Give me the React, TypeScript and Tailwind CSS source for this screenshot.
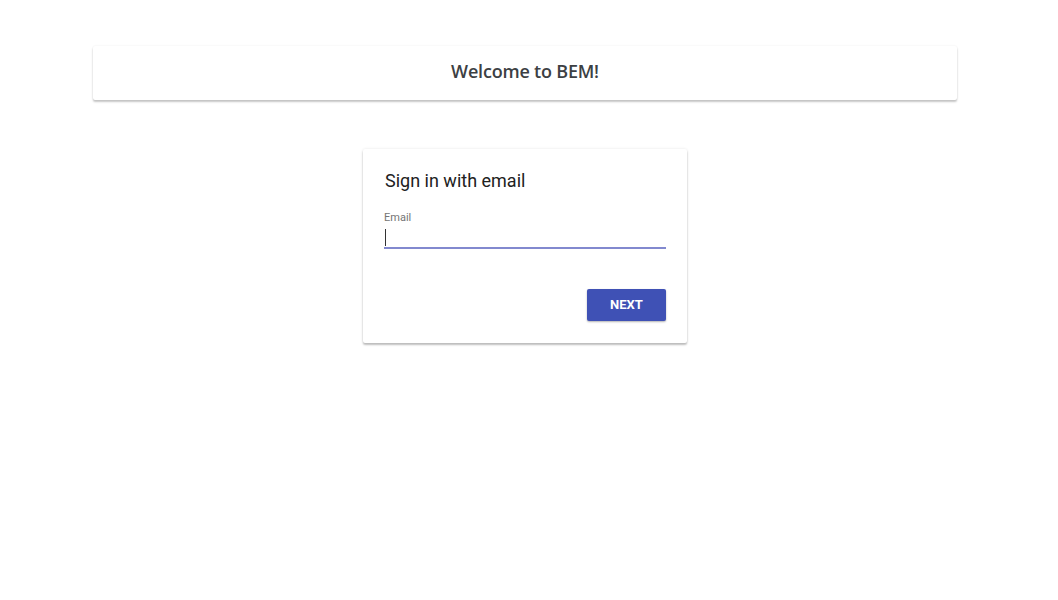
export default function App() {
  return (
    <div className="min-h-[600px] w-[1050px] bg-white font-['Roboto',sans-serif]">
      <div className="pt-[46px] flex justify-center">
        <div className="w-[864px] h-[54px] pb-[4px] bg-white shadow-[0_2px_2px_rgba(0,0,0,0.22),0_0_2px_rgba(0,0,0,0.08)] rounded-[2px] flex items-center justify-center">
          <h1 className="font-['Open_Sans',sans-serif] font-semibold text-[18px] text-[#3c4043] tracking-[-0.2px]">
            Welcome to BEM!
          </h1>
        </div>
      </div>

      <div className="mt-[49px] flex justify-center">
        <div className="w-[324px] bg-white rounded-[2px] shadow-[0_2px_2px_rgba(0,0,0,0.24),0_0_3px_rgba(0,0,0,0.1)] px-[21px] pt-[20px] pb-[22px]">
          <h2 className="pl-px text-[18px] leading-[24px] text-[#212121]">Sign in with email</h2>
          <div className="mt-[18px]">
            <label className="block text-[11px] leading-[14px] text-[#757575]">Email</label>
            <div className="relative mt-[4px] h-[20px] border-b-2 border-[#8289cf]">
              <div className="absolute left-[1px] top-0 w-px h-[17px] bg-[#333]" />
            </div>
          </div>
          <div className="mt-[40px] flex justify-end">
            <button className="w-[79px] h-[32px] bg-[#3f51b5] rounded-[2px] text-white text-[13px] font-bold shadow-[0_1px_2px_rgba(0,0,0,0.3)]">
              NEXT
            </button>
          </div>
        </div>
      </div>
    </div>
  );
}
